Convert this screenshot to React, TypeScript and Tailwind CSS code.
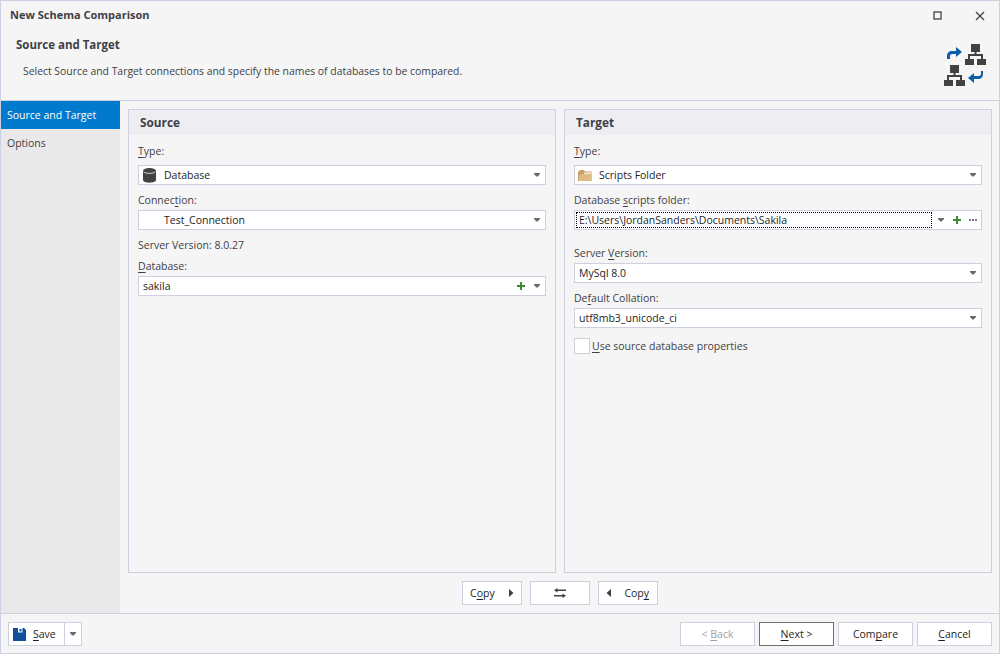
import React from "react";

const Caret = () => (
  <svg width="6" height="4" viewBox="0 0 6 4" className="shrink-0">
    <path d="M0 0h6v1L3.700 3.500H2.300L0 1z" fill="#6a6a6a" />
  </svg>
);

const Plus = () => (
  <svg width="8" height="8" viewBox="0 0 8 8" className="shrink-0">
    <path d="M3 0h2v3h3v2H5v3H3V5H0V3h3z" fill="#388a34" />
  </svg>
);

const U = ({ children }: { children: React.ReactNode }) => <span className="underline underline-offset-2 decoration-1">{children}</span>;

const Label = ({ children, className = "" }: { children: React.ReactNode; className?: string }) => (
  <div className={`h-[15px] pt-px leading-[15px] text-[#3f3f46] ${className}`}>{children}</div>
);

const Field = ({ children, right, className = "" }: { children: React.ReactNode; right?: React.ReactNode; className?: string }) => (
  <div className={`h-5 bg-white border border-[#cfcfe0] flex items-center text-[#1e1e1e] ${className}`}>
    <div className="flex-1 min-w-0 flex items-center">{children}</div>
    <div className="flex items-center gap-[9px] pr-[5px]">{right ?? <Caret />}</div>
  </div>
);

const Btn = ({ children, className = "" }: { children: React.ReactNode; className?: string }) => (
  <div className={`h-6 bg-white border border-[#cfcfe0] flex items-center text-[#1e1e1e] ${className}`}>{children}</div>
);

const Network = () => (
  <path d="M6 0h9v8h-3.500v2H18v5h3v6H12v-6h4v-3H5v3h4v6H0v-6h3v-5h6.500V8H6z" fill="#424242" />
);

const Logo = () => (
  <svg width="42" height="42" viewBox="0 0 42 42" className="shrink-0">
    <g transform="translate(21 0)"><Network /></g>
    <g transform="translate(0 21)"><Network /></g>
    <path d="M3 15v-3c0-3 2-5 5-5h4V3l6 5-6 5V10H8.500C7 10 6 11 6 12v3z" fill="#0f5ca8" />
    <path d="M39 27v3c0 3-2 5-5 5h-4v4l-6-5 6-5v3h4.500c1.500 0 2.500-1 2.500-2v-3z" fill="#0f5ca8" />
  </svg>
);

export default function App() {
  return (
    <div className="w-[1000px] h-[654px] bg-[#f5f5f5] border border-[#cdcfe2] flex flex-col text-[10.5px] overflow-hidden" style={{ fontFamily: '"Open Sans", "Noto Sans", sans-serif' }}>
      <div className="h-[100px] shrink-0 border-b border-[#cdcfe2] flex flex-col relative">
        <div className="flex items-center h-[29px] pl-[9px] shrink-0">
          <span className="font-bold text-[#3f3f46] text-[11px] flex-1">New Schema Comparison</span>
          <svg width="10" height="10" viewBox="0 0 10 10" className="mr-[32px]"><rect x="1" y="1" width="7" height="7" fill="none" stroke="#424242" strokeWidth="1.300" /></svg>
          <svg width="10" height="10" viewBox="0 0 10 10" className="mr-[14px]"><path d="M1 1l8 8M9 1L1 9" stroke="#424242" strokeWidth="1.300" fill="none" /></svg>
        </div>
        <div className="pl-[15px] h-[15px] leading-[15px] mt-[7px] font-bold text-[#3f3f46] text-[11.500px]">Source and Target</div>
        <div className="pl-[22px] mt-[12px] h-[15px] leading-[15px] text-[#3f3f46] text-[10.400px]">Select Source and Target connections and specify the names of databases to be compared.</div>
        <div className="absolute right-[13px] top-[43px]"><Logo /></div>
      </div>

      <div className="flex-1 min-h-0 flex">
        <div className="w-[119px] shrink-0 bg-[#e9e9e9] flex flex-col">
          <div className="h-7 bg-[#007acc] text-white pl-[6px] pt-[2px] flex items-center">Source and Target</div>
          <div className="h-7 text-[#3f3f46] pl-[6px] pt-[2px] flex items-center">Options</div>
        </div>
        <div className="flex-1 min-w-0 flex flex-col pt-2 pl-2 pr-[7px] pb-2">
          <div className="flex-1 min-h-0 flex gap-2">
            <div className="flex-1 border border-[#cfcfe0] flex flex-col">
              <div className="h-[25px] bg-[#eeeef2] pl-[11px] flex items-center font-bold text-[#3f3f46] text-[11.800px]">Source</div>
              <div className="px-[9px] pt-[8px] flex flex-col">
                <Label><U>T</U>ype:</Label>
                <Field className="mt-[7px]">
                  <svg width="14" height="15" viewBox="0 0 14 15" className="ml-[4px] mr-[7px]"><path d="M0 3c0-4 13-4 13 0v9c0 3.500-13 3.500-13 0z" fill="#424242" /><path d="M.5 3.500c1.500 2.500 10.500 2.500 12 0" stroke="#fff" strokeWidth=".8" fill="none" /></svg>
                  <span className="pt-[2px]">Database</span>
                </Field>
                <Label className="mt-[7px]">Connec<U>t</U>ion:</Label>
                <Field className="mt-[3px]"><span className="pl-[25px] pt-[2px]">Test_Connection</span></Field>
                <Label className="mt-[7px]">Server Version: 8.0.27</Label>
                <Label className="mt-[6px]"><U>D</U>atabase:</Label>
                <Field className="mt-[3px]" right={<><Plus /><Caret /></>}><span className="pl-[4px] pt-[2px]">sakila</span></Field>
              </div>
            </div>
            <div className="flex-1 border border-[#cfcfe0] flex flex-col">
              <div className="h-[25px] bg-[#eeeef2] pl-[11px] flex items-center font-bold text-[#3f3f46] text-[11.800px]">Target</div>
              <div className="px-[9px] pt-[8px] flex flex-col">
                <Label><U>T</U>ype:</Label>
                <Field className="mt-[7px]">
                  <svg width="14" height="13" viewBox="0 0 14 13" className="ml-[3px] mr-[7px]">
                    <path d="M0 3 2 1h4l1 1.500h6.500V12H0z" fill="#c9a26b" />
                    <path d="M6 3.500h7v2H6z" fill="#f6ecdc" />
                    <path d="M1 6 5 5h8.500v7H1z" fill="#dfba85" />
                  </svg>
                  <span className="pt-[2px]">Scripts Folder</span>
                </Field>
                <Label className="mt-[7px]">Database <U>s</U>cripts folder:</Label>
                <div className="mt-[3px] h-5 bg-white border border-[#cfcfe0] flex items-center text-[#1e1e1e]">
                  <div className="ml-[1px] w-[356px] h-4 border border-dotted border-black flex items-center pl-[2px] pt-[2px] overflow-hidden whitespace-nowrap">E:\Users\JordanSanders\Documents\Sakila</div>
                  <div className="ml-[6px]"><Caret /></div>
                  <div className="ml-[9px]"><Plus /></div>
                  <svg width="8" height="3" viewBox="0 0 8 3" className="ml-[8px]"><path d="M0 0h2v2H0zM3 0h2v2H3zM6 0h2v2H6z" fill="#7a7a7a" /></svg>
                </div>
                <Label className="mt-[15px]">Server <U>V</U>ersion:</Label>
                <Field className="mt-[3px]"><span className="pl-[4px] pt-[2px]">MySql 8.0</span></Field>
                <Label className="mt-[7px]">De<U>f</U>ault Collation:</Label>
                <Field className="mt-[3px]"><span className="pl-[4px] pt-[2px]">utf8mb3_unicode_ci</span></Field>
                <div className="mt-[10px] flex items-center h-4">
                  <div className="w-4 h-4 bg-white border border-[#cfcfe0] mr-[2px]"></div>
                  <span className="text-[#3f3f46] pt-[2px]"><U>U</U>se source database properties</span>
                </div>
              </div>
            </div>
          </div>
          <div className="mt-2 flex justify-center gap-2 shrink-0">
            <Btn className="w-[60px] justify-between pl-[7px] pr-[7px]">
              <span className="pt-[2px]">C<U>o</U>py</span>
              <svg width="5" height="8" viewBox="0 0 5 8"><path d="M0 0l4.500 4L0 8z" fill="#424242" /></svg>
            </Btn>
            <Btn className="w-[60px] justify-center">
              <svg width="12" height="10" viewBox="0 0 12 10"><path d="M3.500 0v1.500H12v1.500H3.500V4.500L0 2.300zM8.500 5.500 12 7.700 8.500 10V8.500H0V7h8.500z" fill="#424242" /></svg>
            </Btn>
            <Btn className="w-[60px] justify-between pl-[7px] pr-[8px]">
              <svg width="5" height="8" viewBox="0 0 5 8"><path d="M5 0 .5 4 5 8z" fill="#424242" /></svg>
              <span className="pt-[2px]">Cop<U>y</U></span>
            </Btn>
          </div>
        </div>
      </div>

      <div className="h-[40px] shrink-0 border-t border-[#cdcfe2] flex items-center pl-[7px] pr-[7px] pt-[1px]">
        <div className="h-6 w-[74px] bg-white border border-[#cfcfe0] flex items-center text-[#1e1e1e]">
          <div className="w-[56px] h-full flex items-center border-r border-[#cfcfe0] pl-[4px]">
            <svg width="13" height="13" viewBox="0 0 13 13" className="mr-[7px]"><path d="M0 0h11l2 2v11H0z" fill="#0f4f9e" /><path d="M5 0h4.500v4.500H5z" fill="#fff" /><path d="M6.500 1H8.500V3.500H6.500z" fill="#0f4f9e" /></svg>
            <span className="pt-[2px]"><U>S</U>ave</span>
          </div>
          <div className="flex-1 flex justify-center"><Caret /></div>
        </div>
        <div className="flex-1"></div>
        <div className="flex gap-[4px]">
          <Btn className="w-[75px] justify-center !text-[#a2a2a2]"><span className="pt-[2px]">&lt; <U>B</U>ack</span></Btn>
          <Btn className="w-[75px] justify-center !border-[#707070]"><span className="pt-[2px]"><U>N</U>ext &gt;</span></Btn>
          <Btn className="w-[75px] justify-center"><span className="pt-[2px]">Com<U>p</U>are</span></Btn>
          <Btn className="w-[75px] justify-center"><span className="pt-[2px]"><U>C</U>ancel</span></Btn>
        </div>
      </div>
    </div>
  );
}
